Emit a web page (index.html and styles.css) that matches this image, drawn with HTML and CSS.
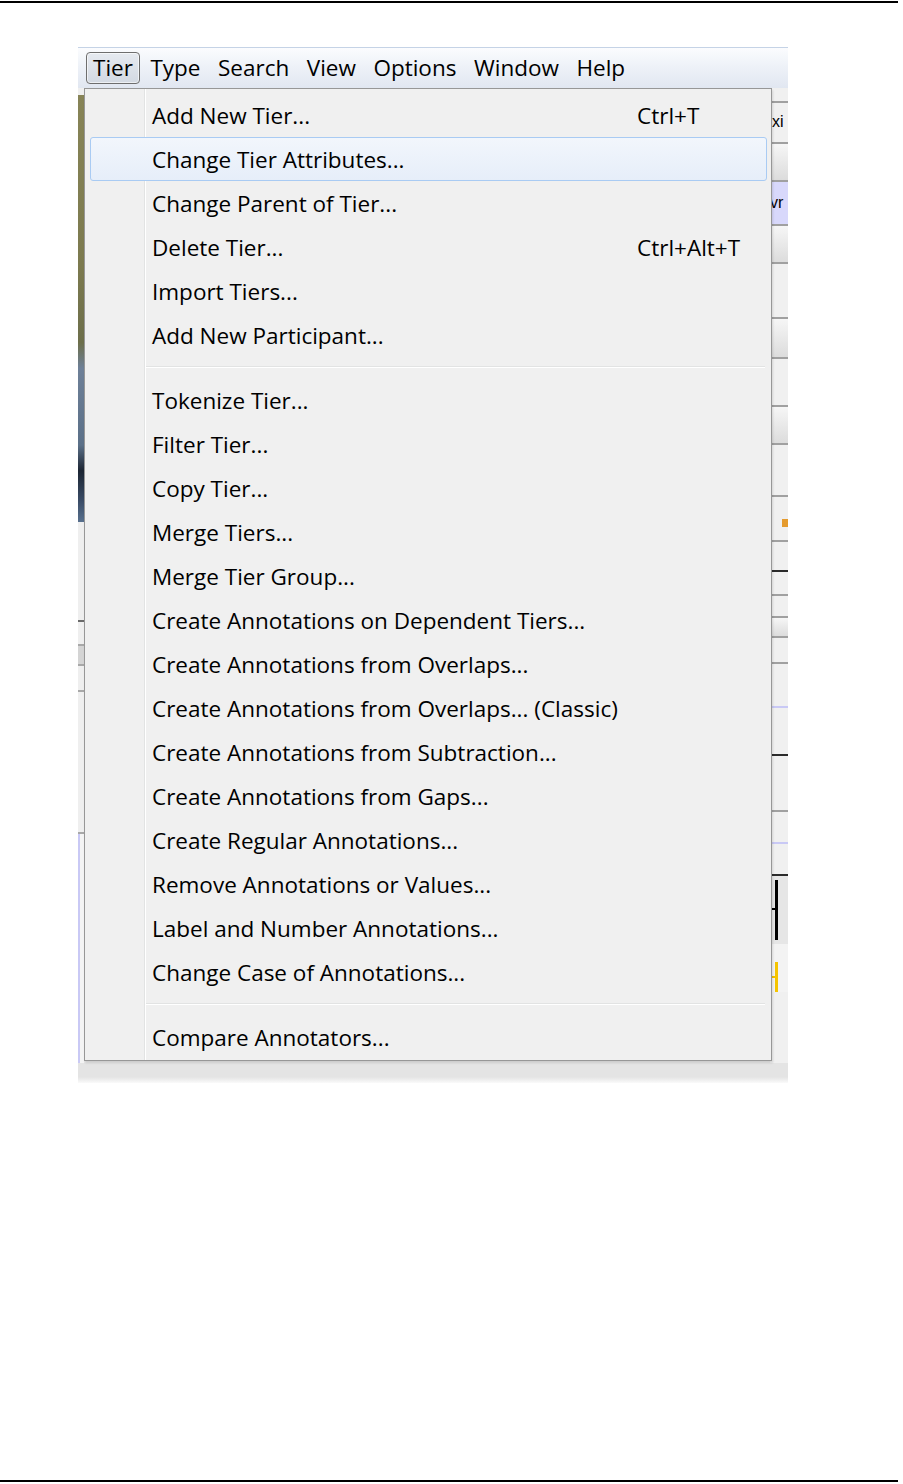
FILE: index.html
```html
<!DOCTYPE html>
<html lang="en">
<head>
    <meta charset="UTF-8">
    <meta name="viewport" content="width=device-width, initial-scale=1.0">
    <title>Tier menu</title>
    <link rel="stylesheet" href="styles.css">
</head>
<body>
    <div class="pagina">
        <hr class="regla">
        <figure class="captura">
            <nav class="barra-menu">
                <span class="menu-top activo">Tier</span>
                <span class="menu-top">Type</span>
                <span class="menu-top">Search</span>
                <span class="menu-top">View</span>
                <span class="menu-top">Options</span>
                <span class="menu-top">Window</span>
                <span class="menu-top">Help</span>
            </nav>
            <div class="ventana">
                <div class="franja-izq">
                    <div class="foto"></div>
                    <div class="fi fi-a"></div>
                    <div class="fi fi-b"></div>
                    <div class="fi fi-c"></div>
                    <div class="fi fi-d"></div>
                    <div class="fi fi-e"></div>
                    <div class="fi fi-lila"></div>
                </div>
                <div class="centro"></div>
                <div class="franja-der">
                    <div class="fd fd-1"></div>
                    <div class="fd fd-texto">xi</div>
                    <div class="fd fd-grad"></div>
                    <div class="fd fd-lila">vr</div>
                    <div class="fd fd-grad"></div>
                    <div class="fd fd-plano fd-55"></div>
                    <div class="fd fd-grad fd-40"></div>
                    <div class="fd fd-plano fd-48"></div>
                    <div class="fd fd-grad"></div>
                    <div class="fd fd-plano fd-52"></div>
                    <div class="fd fd-plano fd-45"><span class="punto"></span></div>
                    <div class="fd fd-oscuro fd-30"></div>
                    <div class="fd fd-plano fd-24"></div>
                    <div class="fd fd-plano fd-22"></div>
                    <div class="fd fd-grad fd-20"></div>
                    <div class="fd fd-plano fd-26"></div>
                    <div class="fd fd-lila-linea fd-44"></div>
                    <div class="fd fd-oscuro fd-48"></div>
                    <div class="fd fd-plano fd-56"></div>
                    <div class="fd fd-lila-linea fd-32"></div>
                    <div class="fd fd-oscuro fd-32"></div>
                    <div class="fd fd-gris fd-68"><span class="corchete"></span></div>
                    <div class="fd fd-claro fd-48"><span class="corchete amarillo"></span></div>
                </div>
            </div>
            <div class="pie-ventana"></div>

            <div class="desplegable">
                <div class="item"><span>Add New Tier...</span><span class="atajo">Ctrl+T</span></div>
                <div class="item resaltado"><span>Change Tier Attributes...</span></div>
                <div class="item"><span>Change Parent of Tier...</span></div>
                <div class="item"><span>Delete Tier...</span><span class="atajo">Ctrl+Alt+T</span></div>
                <div class="item"><span>Import Tiers...</span></div>
                <div class="item"><span>Add New Participant...</span></div>
                <div class="separador"></div>
                <div class="item"><span>Tokenize Tier...</span></div>
                <div class="item"><span>Filter Tier...</span></div>
                <div class="item"><span>Copy Tier...</span></div>
                <div class="item"><span>Merge Tiers...</span></div>
                <div class="item"><span>Merge Tier Group...</span></div>
                <div class="item"><span>Create Annotations on Dependent Tiers...</span></div>
                <div class="item"><span>Create Annotations from Overlaps...</span></div>
                <div class="item"><span>Create Annotations from Overlaps... (Classic)</span></div>
                <div class="item"><span>Create Annotations from Subtraction...</span></div>
                <div class="item"><span>Create Annotations from Gaps...</span></div>
                <div class="item"><span>Create Regular Annotations...</span></div>
                <div class="item"><span>Remove Annotations or Values...</span></div>
                <div class="item"><span>Label and Number Annotations...</span></div>
                <div class="item"><span>Change Case of Annotations...</span></div>
                <div class="separador"></div>
                <div class="item"><span>Compare Annotators...</span></div>
            </div>
        </figure>
        <hr class="regla regla-final">
    </div>
</body>
</html>
```

FILE: styles.css
```css
:root {
    --fondo-menu: #f0f0f0;
    --borde-menu: #979797;
    --lila: #c9c9f5;
}
body {
    margin: 0;
    padding: 0;
    background: white;
    font-family: 'Open Sans', 'Noto Sans', sans-serif;
    color: #000;
}
.pagina {
    width: 903px;
    height: 1484px;
    position: relative;
}
.regla {
    margin: 0;
    margin-top: 1px;
    width: 898px;
    height: 0;
    border: none;
    border-top: 2px solid #000;
}
.regla-final {
    position: absolute;
    left: 0;
    top: 1478px;
}
.captura {
    position: relative;
    margin: 44px 0 0 78px;
    width: 710px;
    height: 1036px;
    background: #e8e8e8;
}

/* barra de menus */
.barra-menu {
    height: 41px;
    box-sizing: border-box;
    border-top: 1px solid #c5d3e6;
    background: linear-gradient(#fbfcfe, #eef2f8 45%, #e1e7f1);
    display: flex;
    align-items: center;
    padding-left: 8px;
    gap: 3.5px;
    font-size: 22.5px;
}
.menu-top {
    padding: 0 6px;
    height: 32px;
    line-height: 29px;
    box-sizing: border-box;
    border: 1px solid transparent;
}
.menu-top.activo {
    border: 1px solid #6e6e6e;
    border-radius: 4px;
    background: linear-gradient(#e6eaf0, #d3d9e2);
    box-shadow: inset 0 0 0 1px rgba(255,255,255,0.6);
}

/* ventana detras del menu */
.ventana {
    display: flex;
    height: 975px;
}
.franja-izq {
    width: 6px;
    display: flex;
    flex-direction: column;
    background: #efefef;
}
.foto {
    margin-top: 7px;
    height: 427px;
    background: linear-gradient(#878457, #7c7a4f 40%, #6d6f4b 58%, #6e8098 64%, #5b7088 82%, #1c2533 88%, #3a4c66 95%, #58708e);
}
.fi { border-bottom: 2px solid #a8a8a8; }
.fi-a { height: 98px; border-bottom-color: #6a6a6a; }
.fi-b { height: 22px; }
.fi-c { height: 18px; background: #d4d4d4; }
.fi-d { height: 24px; }
.fi-e { height: 140px; }
.fi-lila { flex: 1; border: none; border-left: 2px solid var(--lila); background: #f4f4f4; }
.centro { flex: 1; }
.franja-der {
    width: 18px;
    display: flex;
    flex-direction: column;
    background: #f0f0f0;
    font-size: 16px;
    overflow: hidden;
}
.fd {
    border-bottom: 2px solid #a0a0a0;
    box-sizing: border-box;
}
.fd-1 { height: 15px; }
.fd-texto { height: 41px; line-height: 38px; padding-left: 2px; font-family: 'Liberation Sans', sans-serif; }
.fd-grad { height: 38px; background: linear-gradient(#f6f6f6, #dcdcdc); }
.fd-lila { height: 44px; background: #d8d8fb; line-height: 42px; font-family: 'Liberation Sans', sans-serif; margin-left: -4px; padding-left: 4px; }
.fd-plano { background: #f0f0f0; }
.fd-oscuro { border-bottom: 2px solid #2a2a2a; }
.fd-gris { background: #e6e6e6; border: none; position: relative; }
.fd-claro { background: #f3f3f3; border: none; position: relative; }
.fd-lila-linea { border-bottom: 2px solid var(--lila); }
.fd-20 { height: 20px; }
.fd-22 { height: 22px; }
.fd-24 { height: 24px; }
.fd-26 { height: 26px; }
.fd-30 { height: 30px; }
.fd-32 { height: 32px; }
.fd-40 { height: 40px; }
.fd-44 { height: 44px; }
.fd-45 { height: 45px; position: relative; }
.fd-48 { height: 48px; }
.fd-52 { height: 52px; }
.fd-55 { height: 55px; }
.fd-56 { height: 56px; }
.fd-68 { height: 68px; }
.punto {
    position: absolute;
    left: 12px;
    top: 22px;
    width: 6px;
    height: 8px;
    background: #e59b2e;
}
.corchete {
    position: absolute;
    left: 5px;
    top: 4px;
    width: 3px;
    height: 60px;
    background: #000;
}
.corchete::before {
    content: "";
    position: absolute;
    left: -6px;
    top: 28px;
    width: 6px;
    height: 2px;
    background: inherit;
}
.corchete.amarillo {
    top: 18px;
    height: 30px;
    background: #f5c400;
}
.corchete.amarillo::before { top: 14px; }
.pie-ventana {
    height: 20px;
    background: linear-gradient(#e4e4e4 70%, #fafafa);
}

/* menu desplegable */
.desplegable {
    position: absolute;
    left: 6px;
    top: 41px;
    width: 688px;
    height: 973px;
    box-sizing: border-box;
    border: 1px solid var(--borde-menu);
    padding: 4px 4px 0 5px;
    background: linear-gradient(to right, var(--fondo-menu) 59px, #e2e3e3 59px, #e2e3e3 60px, #fff 60px, #fff 61px, var(--fondo-menu) 61px);
    box-shadow: 1px 2px 2px rgba(0,0,0,0.12);
    font-size: 22.5px;
}
.item {
    height: 44px;
    display: grid;
    grid-template-columns: 1fr 129px;
    align-items: center;
    padding-left: 61px;
    box-sizing: border-box;
    border: 1px solid transparent;
    border-radius: 3px;
    white-space: nowrap;
}
.item.resaltado {
    border-color: #a9cbf3;
    background: linear-gradient(#f2f6fc, #e6eef9);
}
.separador {
    height: 21px;
    margin-left: 56px;
    margin-right: 2px;
    background: linear-gradient(transparent 9px, #e2e3e3 9px, #e2e3e3 10px, #fff 10px, #fff 11px, transparent 11px);
}
```
